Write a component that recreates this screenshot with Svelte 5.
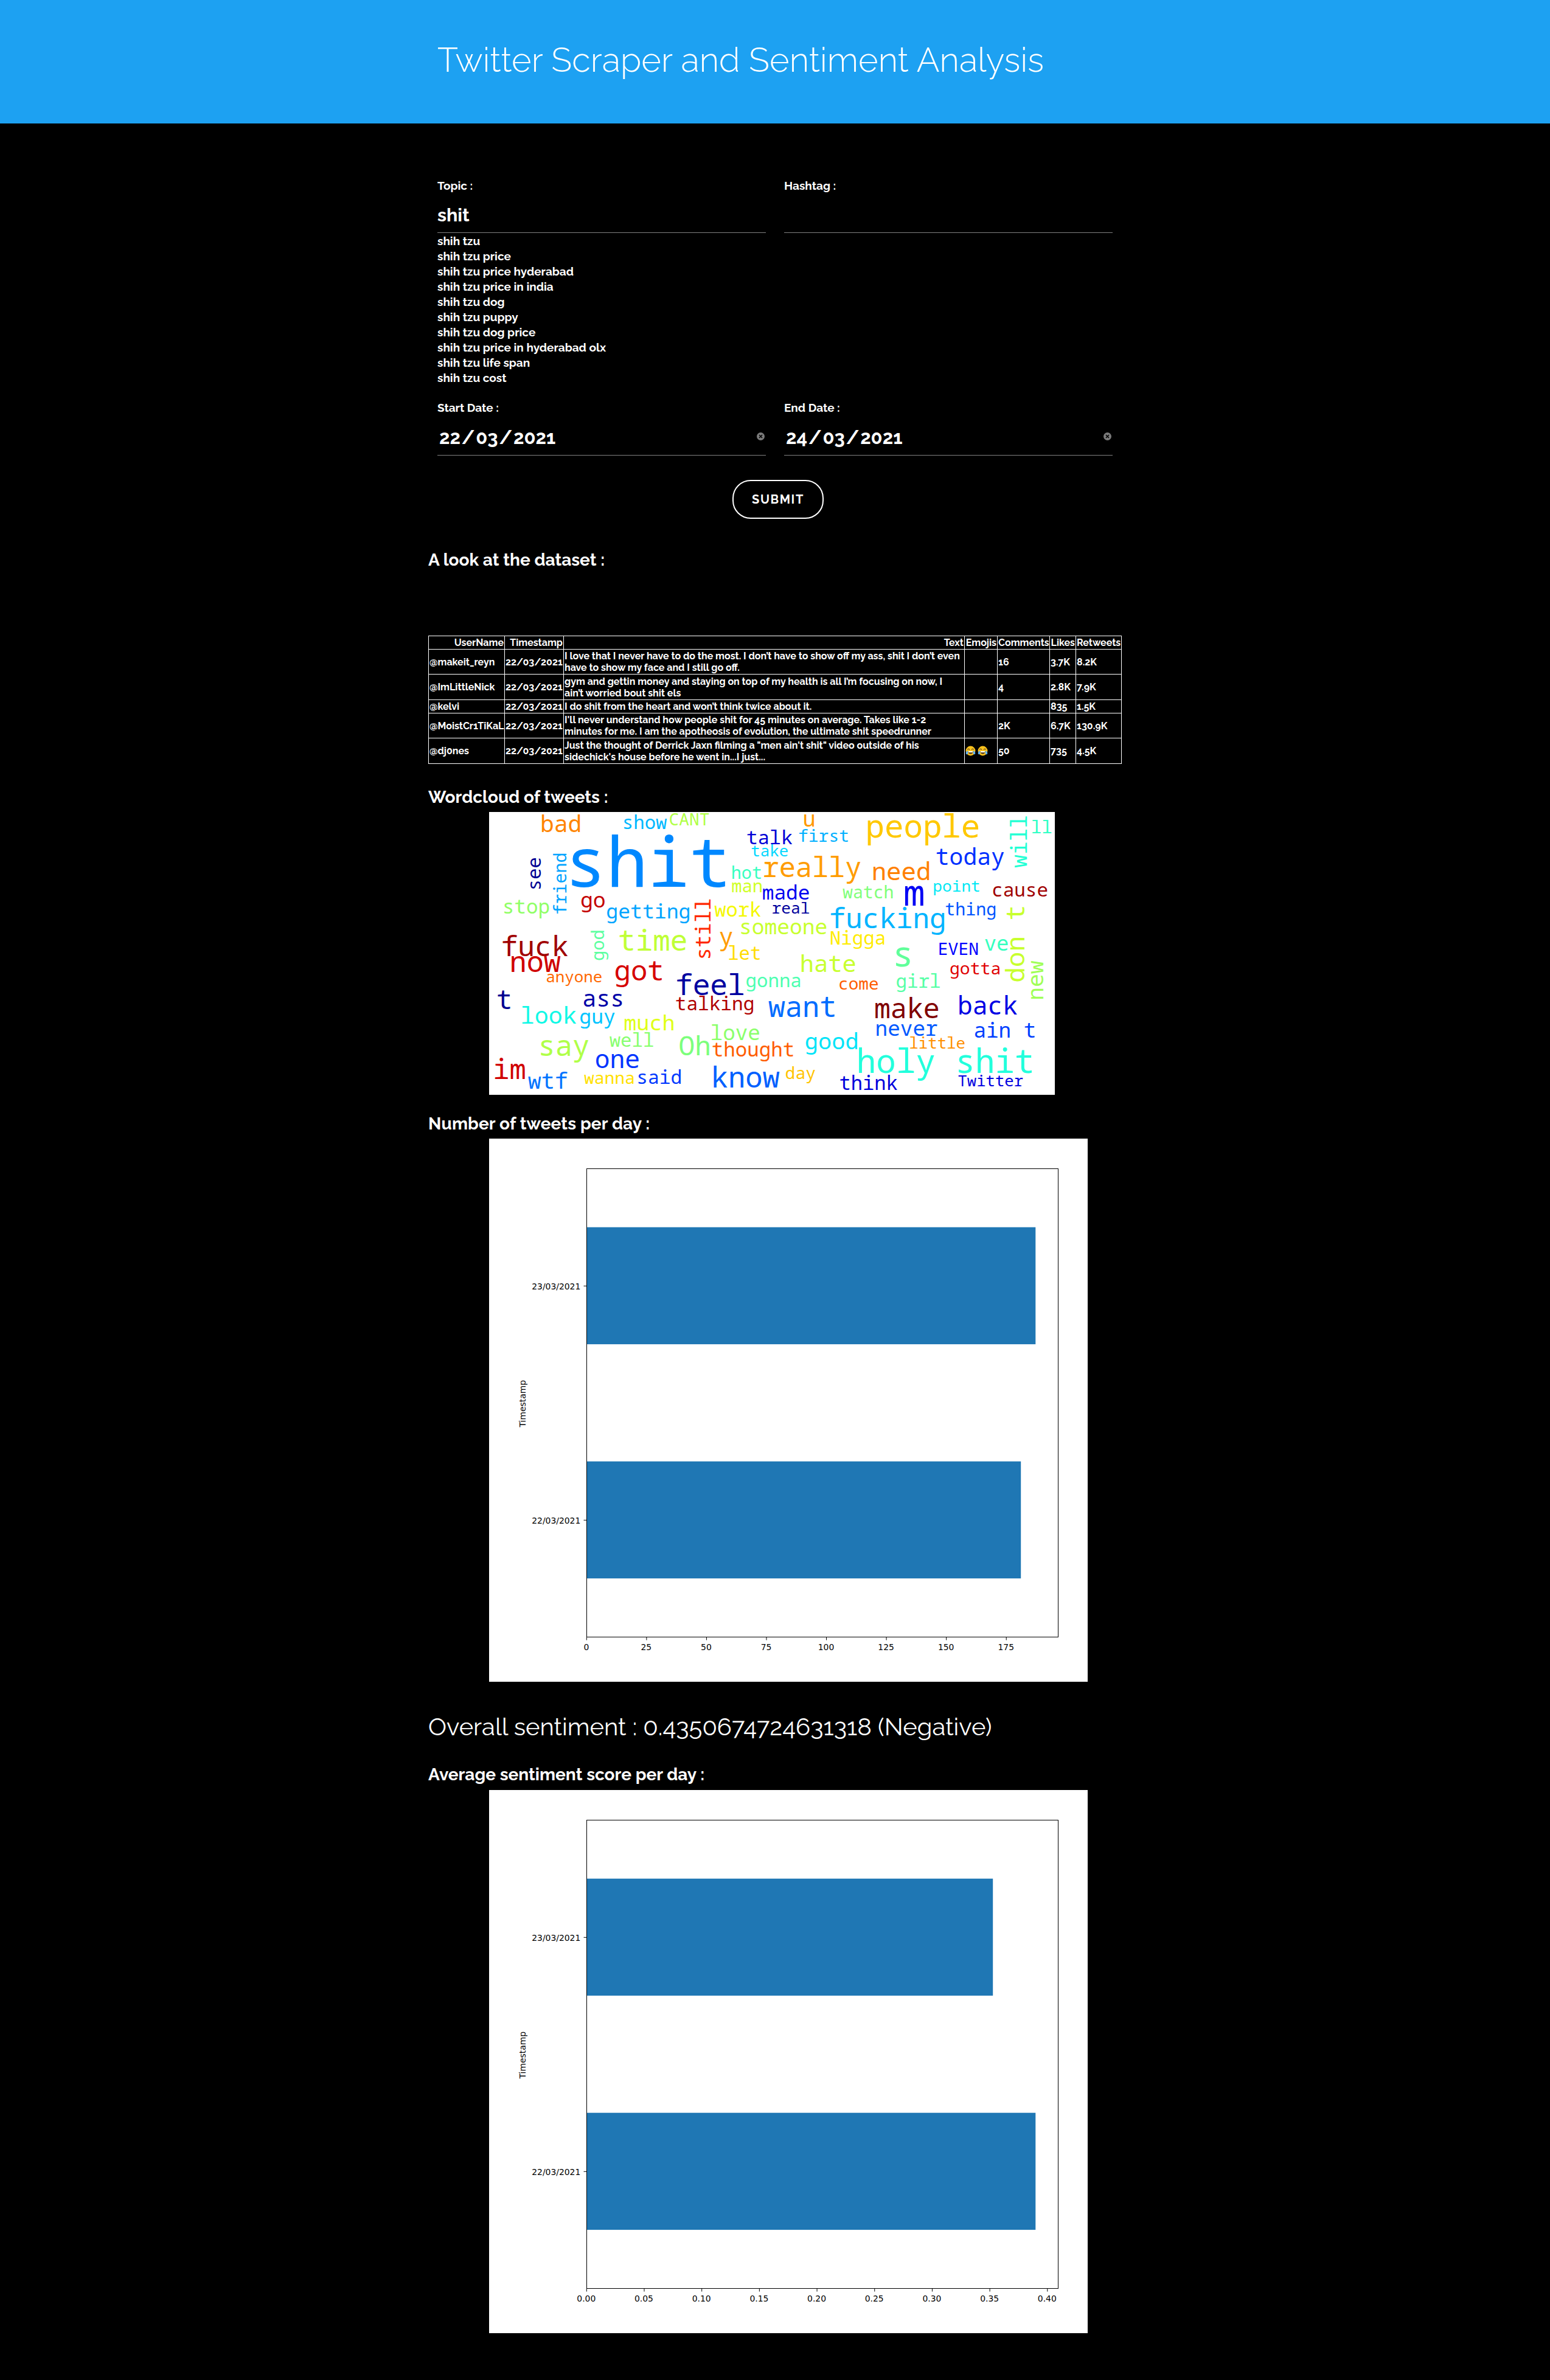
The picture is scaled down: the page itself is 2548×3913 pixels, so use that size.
<script>
  const suggestions = [
    'shih tzu',
    'shih tzu price',
    'shih tzu price hyderabad',
    'shih tzu price in india',
    'shih tzu dog',
    'shih tzu puppy',
    'shih tzu dog price',
    'shih tzu price in hyderabad olx',
    'shih tzu life span',
    'shih tzu cost'
  ];

  const tweets = [
    { user: '@makeit_reyn', lines: ['I love that I never have to do the most. I don’t have to show off my ass, shit I don’t even', 'have to show my face and I still go off.'], emojis: 0, comments: '16', likes: '3.7K', retweets: '8.2K' },
    { user: '@ImLittleNick', lines: ['gym and gettin money and staying on top of my health is all I’m focusing on now, I', 'ain’t worried bout shit els'], emojis: 0, comments: '4', likes: '2.8K', retweets: '7.9K' },
    { user: '@kelvi', lines: ['I do shit from the heart and won’t think twice about it.'], emojis: 0, comments: '', likes: '835', retweets: '1.5K' },
    { user: '@MoistCr1TiKaL', lines: ["I'll never understand how people shit for 45 minutes on average. Takes like 1-2", 'minutes for me. I am the apotheosis of evolution, the ultimate shit speedrunner'], emojis: 0, comments: '2K', likes: '6.7K', retweets: '130.9K' },
    { user: '@dj0nes', lines: ['Just the thought of Derrick Jaxn filming a "men ain\'t shit" video outside of his', "sidechick's house before he went in...I just..."], emojis: 2, comments: '50', likes: '735', retweets: '4.5K' }
  ];

  // text, ink start, ink end, baseline, colour
  const across = [
    ['bad', 87.3, 148.7, 33.3, '#ff8400'], ['show', 221.3, 292.7, 28.3, '#00b8ff'],
    ['CANT', 297, 362, 22, '#b0ff46'], ['talk', 424, 499.3, 53, '#0000d6'],
    ['take', 431.3, 491, 73.3, '#02d8ff'], ['shit', 133.7, 389.3, 123.3, '#0088ff'],
    ['go', 152, 190, 156.7, '#c40000'], ['stop', 24.3, 98.7, 166.7, '#90ff66'],
    ['getting', 194.3, 328.7, 175.3, '#00a4ff'], ['hot', 400.3, 447, 110, '#36ffc0'],
    ['man', 399.3, 447.7, 131.7, '#d0ff26'], ['work', 370.3, 447.7, 172.3, '#f4f802'],
    ['made', 450, 526, 144.3, '#0000f0'], ['real', 467.7, 526, 167, '#00009c'],
    ['someone', 413.7, 555, 201, '#c8ff2e'], ['really', 455, 611, 107, '#ff9c00'],
    ['fuck', 22.7, 131, 236.7, '#a00000'], ['now', 37.7, 118.3, 263, '#d00000'],
    ['time', 214, 324, 228.3, '#c0ff36'], ['y', 379.3, 400, 218.7, '#ff9c00'],
    ['let', 394.3, 445, 243, '#ffdc00'], ['anyone', 94.7, 185.3, 279.7, '#ff6800'],
    ['got', 208.3, 284.3, 277.3, '#d60000'], ['feel', 309.3, 418.3, 300.7, '#0000a0'],
    ['gonna', 423.3, 511.7, 288.3, '#4cffb0'], ['t', 13.7, 34.7, 324, '#000090'],
    ['ass', 155.3, 219.3, 320, '#0000a8'], ['talking', 307, 433.7, 325.7, '#b00000'],
    ['look', 54.3, 144.3, 348.3, '#12f8e6'], ['guy', 150.3, 206.7, 348.3, '#00c4ff'],
    ['much', 222.7, 302.7, 359, '#e0ff18'], ['well', 197.7, 269.7, 386, '#88ff70'],
    ['love', 366, 444.3, 375, '#8cff6c'], ['Oh', 313.7, 361, 400, '#7cff7c'],
    ['thought', 367, 500.3, 401.7, '#ff5c00'], ['say', 84.3, 163.7, 400.7, '#b0ff48'],
    ['one', 176, 246, 421.3, '#0034ff'], ['im', 10.3, 59.3, 439, '#d00000'],
    ['wtf', 63.7, 127.3, 455.3, '#0074ff'], ['wanna', 156, 238, 447.3, '#ffe000'],
    ['said', 244.7, 314.3, 447.3, '#0038ff'], ['know', 369.3, 478.3, 452.7, '#0060ff'],
    ['u', 518.7, 533.7, 23.7, '#ff9800'], ['first', 510, 590, 49, '#00b0ff'],
    ['people', 623.3, 805, 42, '#ffc800'], ['ll', 892.7, 924.3, 35, '#30ffc6'],
    ['today', 735.3, 846.7, 87.3, '#0030ff'], ['need', 632.3, 722.7, 111.7, '#ff8000'],
    ['m', 683.3, 714.3, 154, '#0000f4'], ['point', 731.7, 806, 130.7, '#02e8f4'],
    ['cause', 828.3, 917.7, 139, '#a00000'], ['watch', 581, 663.3, 142, '#80ff7a'],
    ['fucking', 562, 747.7, 190.7, '#00b4ff'], ['thing', 750.3, 831.7, 169.7, '#0054ff'],
    ['Nigga', 561.7, 650, 218.3, '#ffec00'], ['s', 667.7, 693.3, 254.3, '#60ff9a'],
    ['EVEN', 740.3, 803.7, 235, '#0000ff'], ['ve', 815, 852.7, 227.7, '#36ffc0'],
    ['hate', 514.3, 602, 263.3, '#c8ff30'], ['gotta', 758.7, 839.3, 267, '#e00000'],
    ['come', 576, 639.3, 291.7, '#ff5c00'], ['girl', 670.3, 741, 289.3, '#56ffa6'],
    ['want', 458.7, 568, 336.7, '#006cff'], ['make', 634.7, 738.7, 339, '#800000'],
    ['back', 773.7, 869.3, 333.3, '#0000e4'], ['never', 637.7, 737, 368.3, '#0058ff'],
    ['ain t', 798.3, 897, 370.7, '#0040ff'], ['good', 521, 604.3, 390, '#00e4f8'],
    ['little', 692, 782, 389, '#ff9000'], ['holy shit', 608.7, 893.3, 428.7, '#22ffdc'],
    ['day', 488.3, 536, 439.3, '#ffc400'], ['think', 576.7, 672, 457.3, '#0000dc'],
    ['Twitter', 771, 877.7, 450.7, '#0000e0']
  ];

  // text, lower ink end, upper ink end, baseline x, colour (read bottom to top)
  const upward = [
    ['see', 126.7, 75.7, 85, '#000092'], ['friend', 166.7, 69, 126.7, '#00a4ff'],
    ['still', 240.7, 143.3, 364.3, '#ff2800'], ['god', 243.3, 196, 188.7, '#5cffa0'],
    ['will', 91.7, 7, 884.3, '#22ffd4'], ['don t', 278.3, 155.7, 880, '#c8ff2e'],
    ['new', 306.7, 244, 910.7, '#a0ff56']
  ];

  // side bearings of the monospaced letters, in em
  const left = { w: 0, v: 0.04, y: 0.04, m: 0.04, t: 0.04, l: 0.07, i: 0.09, r: 0.12, b: 0.09, p: 0.09, k: 0.1, n: 0.09, h: 0.09, u: 0.09, a: 0.055, e: 0.05, o: 0.055, g: 0.06, d: 0.06, c: 0.07, s: 0.08, f: 0.07, N: 0.06, E: 0.09, C: 0.05, T: 0.02, O: 0.05 };
  const right = { w: 0, v: 0.04, y: 0.04, m: 0.04, t: 0.08, l: 0.06, i: 0.06, r: 0.03, k: 0.0, n: 0.09, h: 0.09, u: 0.09, d: 0.1, g: 0.1, a: 0.08, e: 0.055, o: 0.055, p: 0.055, f: 0.07, s: 0.08, N: 0.06, T: 0.02 };

  function fit(text, length) {
    const a = left[text[0]] ?? 0.07;
    const b = right[text[text.length - 1]] ?? 0.07;
    const size = length / (text.length * 0.602 - a - b);
    return { size, offset: a * size };
  }

  const cloud = [
    ...across.map(([text, x1, x2, y, color]) => {
      const { size, offset } = fit(text, x2 - x1);
      return { text, size, color, move: `translate(${x1 - offset} ${y})` };
    }),
    ...upward.map(([text, y1, y2, x, color]) => {
      const { size, offset } = fit(text, y1 - y2);
      return { text, size, color, move: `translate(${x} ${y1 + offset}) rotate(-90)` };
    })
  ];

  const perDay = {
    bars: [{ label: '23/03/2021', end: 898.3 }, { label: '22/03/2021', end: 874.2 }],
    ticks: ['0', '25', '50', '75', '100', '125', '150', '175'],
    step: 98.56
  };
  const sentiment = {
    bars: [{ label: '23/03/2021', end: 828.2 }, { label: '22/03/2021', end: 898.3 }],
    ticks: ['0.00', '0.05', '0.10', '0.15', '0.20', '0.25', '0.30', '0.35', '0.40'],
    step: 94.69
  };
</script>

{#snippet joy()}
  <svg class="joy" viewBox="0 0 18 18" aria-hidden="true">
    <circle cx="9" cy="9" r="8.4" fill="#fcc21b" />
    <path d="M3.6 6.6 Q5.4 4.6 7 6.8 M11 6.8 Q12.6 4.6 14.4 6.6" fill="none" stroke="#5b4420" stroke-width="1.1" stroke-linecap="round" />
    <path d="M4.8 9.4 H13.2 Q12.8 14.6 9 14.6 Q5.2 14.6 4.8 9.4Z" fill="#5b4420" />
    <path d="M5.2 9.5 H12.8 L12.4 11.6 H5.6Z" fill="#fff" />
    <path d="M4 8.6 Q.4 10.8 .8 13.6 Q1.6 16 3.6 14.8 Q5.2 13.2 4 8.6Z M14 8.6 Q17.6 10.8 17.2 13.6 Q16.4 16 14.4 14.8 Q12.8 13.2 14 8.6Z" fill="#5db1f5" />
  </svg>
{/snippet}

{#snippet dateField(label, day, month, year)}
  <div class="field">
    <span class="label">{label}</span>
    <div class="control">
      <span class="date"><span>{day}</span><i>/</i><span>{month}</span><i>/</i><span>{year}</span></span>
      <svg class="clear" viewBox="0 0 12 12" aria-hidden="true">
        <circle cx="6" cy="6" r="6" fill="#7b7b7b" />
        <path d="M3.7 3.7 L8.3 8.3 M8.3 3.7 L3.7 8.3" stroke="#000" stroke-width="1.5" />
      </svg>
    </div>
  </div>
{/snippet}

{#snippet chart({ bars, ticks, step })}
  <svg class="chart" viewBox="0 0 984 893">
    <rect width="984" height="893" fill="#fff" />
    {#each bars as bar, i}
      <rect x="160.5" y={145.7 + i * 385} width={bar.end - 160.5} height="192.4" fill="#1f77b4" />
      <path d="M155.5 {242.3 + i * 385} H160" stroke="#000" stroke-width="1" />
      <text x="150.3" y={248 + i * 384.6} text-anchor="end">{bar.label}</text>
    {/each}
    <rect x="160.5" y="49.5" width="775" height="770" fill="none" stroke="#000" stroke-width="1" />
    {#each ticks as tick, i}
      <path d="M{160.3 + i * step} 820 V824.6" stroke="#000" stroke-width="1" />
      <text x={159.8 + i * step} y="840.7" text-anchor="middle">{tick}</text>
    {/each}
    <text transform="translate(60 435.7) rotate(-90)" text-anchor="middle">Timestamp</text>
  </svg>
{/snippet}

<header>
  <div class="container inset"><h1>Twitter Scraper and Sentiment Analysis</h1></div>
</header>

<main class="container">
  <form class="inset" onsubmit={(e) => e.preventDefault()}>
    <div class="row">
      <div class="field">
        <span class="label">Topic :</span>
        <div class="control"><span class="value">shit</span></div>
        <ul>
          {#each suggestions as s}<li>{s}</li>{/each}
        </ul>
      </div>
      <div class="field">
        <span class="label">Hashtag :</span>
        <div class="control"></div>
      </div>
    </div>
    <div class="row dates">
      {@render dateField('Start Date :', '22', '03', '2021')}
      {@render dateField('End Date :', '24', '03', '2021')}
    </div>
    <button>SUBMIT</button>
  </form>

  <h2 class="first">A look at the dataset :</h2>
  <table>
    <colgroup><col class="c1" /><col class="c2" /><col class="c3" /><col class="c4" /><col class="c5" /><col class="c6" /><col class="c7" /></colgroup>
    <thead>
      <tr><th>UserName</th><th>Timestamp</th><th>Text</th><th>Emojis</th><th>Comments</th><th>Likes</th><th>Retweets</th></tr>
    </thead>
    <tbody>
      {#each tweets as t, i}
        <tr class:short={t.lines.length === 1} class:tall={i === 1 || i === 4}>
          <td>{t.user}</td>
          <td>22/03/2021</td>
          <td>{#each t.lines as line}<div>{line}</div>{/each}</td>
          <td>{#if t.emojis}<div class="emojis">{#each { length: t.emojis } as _}{@render joy()}{/each}</div>{/if}</td>
          <td>{t.comments}</td>
          <td>{t.likes}</td>
          <td>{t.retweets}</td>
        </tr>
      {/each}
    </tbody>
  </table>

  <h2 class="cloud-title">Wordcloud of tweets :</h2>
  <svg class="cloud" viewBox="0 0 930 465">
    <rect width="930" height="465" fill="#fff" />
    {#each cloud as w}
      <text transform={w.move} font-size={w.size} fill={w.color}>{w.text}</text>
    {/each}
  </svg>

  <h2 class="count-title">Number of tweets per day :</h2>
  {@render chart(perDay)}

  <p class="overall">Overall sentiment : 0.4350674724631318 (Negative)</p>
  <h2 class="average-title">Average sentiment score per day :</h2>
  {@render chart(sentiment)}
</main>

<style>
  :global(body) {
    background: #000;
    color: #fff;
    font-family: Raleway, Lato, sans-serif;
    font-weight: 700;
  }
  .container {
    width: 1140px;
    margin: 0 auto;
    box-sizing: border-box;
  }
  .inset {
    padding-left: 15px;
    padding-right: 15px;
  }
  header {
    height: 203px;
    box-sizing: border-box;
    padding-bottom: 7px;
    background: #1da1f2;
    display: flex;
    align-items: center;
  }
  h1 {
    margin: 0;
    font-size: 56px;
    line-height: 68px;
    font-weight: 300;
    letter-spacing: 0.11px;
    white-space: nowrap;
  }
  main {
    height: 3710px;
    padding-top: 90px;
  }
  .row {
    display: grid;
    grid-template-columns: 1fr 1fr;
    gap: 30px;
  }
  .dates {
    margin-top: 24px;
  }
  .label {
    display: block;
    font-size: 19px;
    line-height: 25px;
  }
  .control {
    height: 65px;
    box-sizing: border-box;
    border-bottom: 1px solid #808080;
    padding-top: 5px;
    display: flex;
    align-items: center;
    justify-content: space-between;
  }
  .dates .control {
    height: 66px;
    padding-top: 7px;
  }
  .value {
    font-size: 30.4px;
  }
  .date {
    display: flex;
    padding-left: 3px;
    font-size: 31px;
  }
  .date i {
    width: 25.3px;
    text-align: center;
    font-style: normal;
  }
  .clear {
    width: 13px;
    height: 13px;
    margin: 0 2px 4px 0;
  }
  ul {
    margin: 0;
    padding: 1px 0 0;
    list-style: none;
    font-size: 19px;
    line-height: 25px;
  }
  button {
    display: block;
    width: 150px;
    height: 64px;
    margin: 40px 0 0 485px;
    padding: 0;
    border: 2px solid #fff;
    border-radius: 30px;
    background: none;
    color: #fff;
    font: inherit;
    font-size: 20px;
    letter-spacing: 1.6px;
  }
  h2 {
    margin: 31px 0 7px;
    font-size: 28px;
    line-height: 34px;
    font-weight: 700;
    white-space: nowrap;
  }
  .first {
    margin: 51px 0 107px;
  }
  .cloud-title {
    margin-top: 38px;
  }
  .count-title {
    letter-spacing: 0.12px;
  }
  .average-title {
    margin: 38px 0 8px;
  }
  table {
    width: 1139px;
    table-layout: fixed;
    border-collapse: collapse;
    font-size: 16px;
    line-height: 19px;
    white-space: nowrap;
  }
  th,
  td {
    border: 1px solid #fff;
    padding: 0 1px;
    font-weight: 700;
    text-align: left;
  }
  th {
    height: 21px;
    text-align: right;
  }
  td {
    height: 40px;
  }
  .short td {
    height: 21px;
  }
  .tall td {
    height: 41px;
  }
  .c1 { width: 125px; }
  .c2 { width: 97px; }
  .c3 { width: 659px; }
  .c4 { width: 54px; }
  .c5 { width: 86px; }
  .c6 { width: 43px; }
  .c7 { width: 75px; }
  .emojis {
    display: flex;
    gap: 3px;
  }
  .joy {
    width: 17px;
    height: 17px;
  }
  .cloud,
  .chart {
    display: block;
    margin-left: 100px;
  }
  .cloud {
    width: 930px;
    height: 465px;
  }
  .cloud text {
    font-family: 'Droid Sans Mono', 'Noto Sans Mono', 'DejaVu Sans Mono', monospace;
    font-weight: 400;
    white-space: pre;
  }
  .chart {
    width: 984px;
    height: 893px;
  }
  .chart text {
    font: 400 13.9px 'DejaVu Sans', sans-serif;
    fill: #000;
  }
  .overall {
    margin: 50px 0 0;
    font-size: 40px;
    line-height: 48px;
    font-weight: 400;
    white-space: nowrap;
  }
</style>
